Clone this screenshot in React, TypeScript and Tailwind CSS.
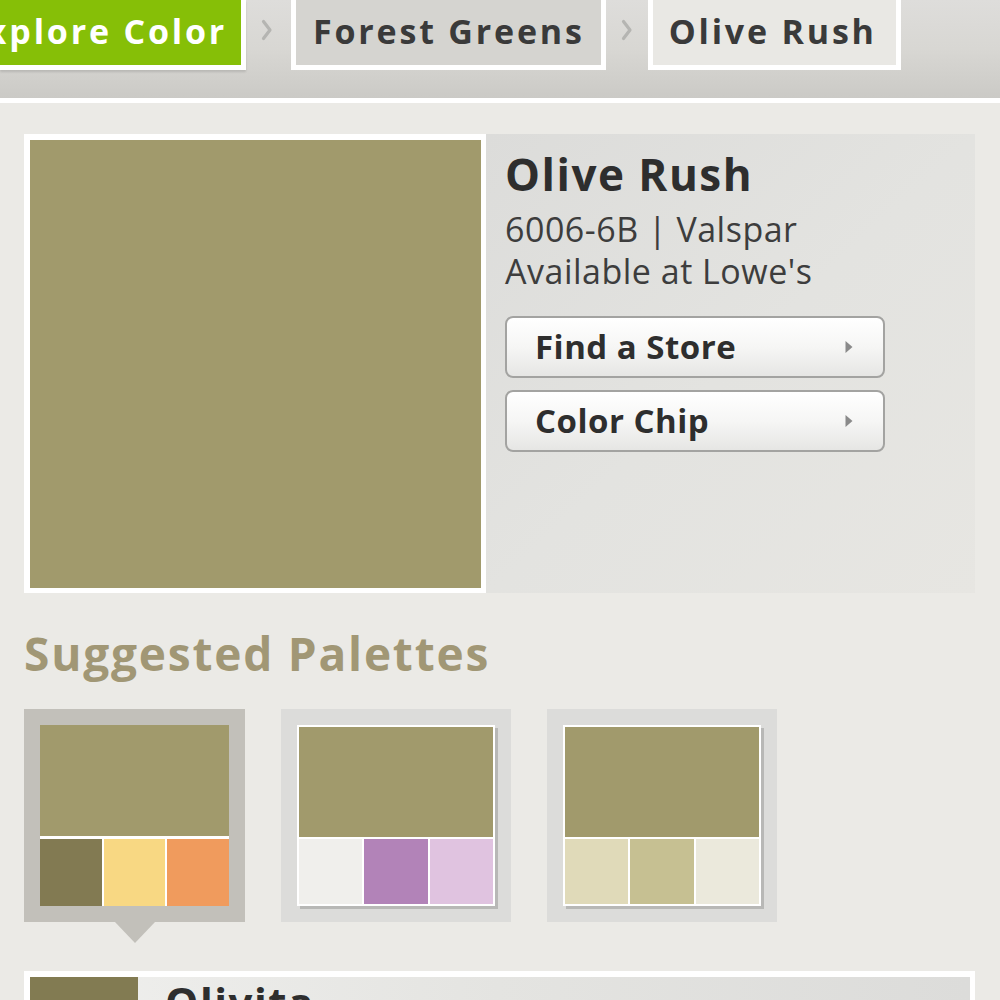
import React from "react";

const font = { fontFamily: '"Open Sans", "Liberation Sans", sans-serif' };

function Chevron({ ml, mr }: { ml: string; mr: string }) {
  return (
    <div className={`h-[70px] flex items-center pb-[10px] ${ml} ${mr}`}>
      <svg width="12" height="22" viewBox="0 0 12 22">
        <path d="M2.5 2.5 L9 11 L2.5 19.5" fill="none" stroke="#b5b5b2" strokeWidth="3.2" strokeLinecap="round" strokeLinejoin="round" />
      </svg>
    </div>
  );
}

function Tri() {
  return (
    <svg width="10" height="16" viewBox="0 0 10 16">
      <path d="M1.5 2 L8.5 8 L1.5 14 Z" fill="#8a8a8a" />
    </svg>
  );
}

function Palette({ selected, colors }: { selected?: boolean; colors: string[] }) {
  return (
    <div className="relative">
      <div className={`${selected ? "bg-[#c2c0ba] w-[221px]" : "bg-[#dcdcda] w-[230px]"} h-[213px] p-[16px]`}>
        {selected ? (
          <div className="flex flex-col h-full bg-white">
            <div className="h-[111px] bg-[#a19a6c]" />
            <div className="flex gap-[2px] mt-[3px] flex-1">
              {colors.map((c, i) => (
                <div key={i} className="flex-1" style={{ background: c }} />
              ))}
            </div>
          </div>
        ) : (
          <div className="flex flex-col h-full bg-white p-[2px] shadow-[3px_3px_0_#b8b8b6]">
            <div className="h-[110px] bg-[#a19a6c]" />
            <div className="flex gap-[2px] mt-[2px] flex-1">
              {colors.map((c, i) => (
                <div key={i} className="flex-1" style={{ background: c }} />
              ))}
            </div>
          </div>
        )}
      </div>
      {selected && (
        <div className="absolute left-[91px] top-[213px] w-0 h-0 border-l-[20px] border-r-[20px] border-t-[21px] border-l-transparent border-r-transparent border-t-[#c2c0ba]" />
      )}
    </div>
  );
}

export default function App() {
  return (
    <div className="w-[1000px] h-[1000px] overflow-hidden bg-[#ebeae6]" style={font}>
      {/* header */}
      <div className="h-[103px] bg-gradient-to-b from-[#dedddb] via-[#d8d7d3] to-[#cbcac6] border-b-[5px] border-white flex items-start">
        <div className="h-[70px] w-[246px] shrink-0 bg-[#86bf07] border-r-[5px] border-b-[5px] border-white flex items-center justify-end pr-[14px] pb-[2px] shadow-[0_2px_2px_rgba(0,0,0,0.12)]">
          <span className="text-white font-bold text-[34px] tracking-[2.8px] whitespace-nowrap">Explore Color</span>
        </div>
        <Chevron ml="ml-[15px]" mr="mr-[18px]" />
        <div className="h-[70px] bg-[#d5d4d0] border-[5px] border-t-0 border-white flex items-center pl-[17px] pr-[16px] pb-[3px]">
          <span className="text-[#3a3a3a] font-bold text-[34px] tracking-[2.8px] whitespace-nowrap">Forest Greens</span>
        </div>
        <Chevron ml="ml-[15px]" mr="mr-[15px]" />
        <div className="h-[70px] bg-[#e9e8e4] border-[5px] border-t-0 border-white flex items-center pl-[16px] pr-[19px] pb-[3px]">
          <span className="text-[#3a3a3a] font-bold text-[34px] tracking-[2.8px] whitespace-nowrap">Olive Rush</span>
        </div>
      </div>

      {/* main */}
      <div className="pl-[24px] pr-[25px] pt-[31px]">
        <div className="flex h-[459px]">
          <div className="w-[462px] h-full bg-white p-[6px] pb-[5px] pr-[5px]">
            <div className="w-full h-full bg-[#a19a6c]" />
          </div>
          <div className="flex-1 bg-gradient-to-br from-[#dcdcda] via-[#e3e3e0] to-[#e7e6e2] pl-[19px] pt-[12px]">
            <div className="text-[#2e2e2e] font-bold text-[44px] leading-[56px] tracking-[1.5px]">Olive Rush</div>
            <div className="text-[#3d3d3d] text-[34px] leading-[42px] tracking-[0.5px] mt-[6px]">6006-6B | Valspar</div>
            <div className="text-[#3d3d3d] text-[34px] leading-[42px] tracking-[0.5px]">Available at Lowe's</div>
            <div className="mt-[24px] flex flex-col gap-[12px] w-[380px]">
              {["Find a Store", "Color Chip"].map((t) => (
                <div
                  key={t}
                  className="h-[62px] rounded-[8px] border-2 border-[#a3a3a1] bg-gradient-to-b from-white via-[#f6f6f5] to-[#e6e6e4] flex items-center justify-between pl-[28px] pr-[29px]"
                >
                  <span className="text-[#2e2e2e] font-bold text-[33px] tracking-[0.5px]">{t}</span>
                  <Tri />
                </div>
              ))}
            </div>
          </div>
        </div>

        <div className="mt-[32px] text-[#a19775] font-bold text-[46px] leading-[56px] tracking-[1.8px]">Suggested Palettes</div>

        <div className="mt-[28px] flex gap-[36px]">
          <Palette selected colors={["#827a52", "#f8d883", "#f09b5d"]} />
          <Palette colors={["#f0efec", "#b283b8", "#e0c3e0"]} />
          <Palette colors={["#e0dab9", "#c6c092", "#ebe9dc"]} />
        </div>

        <div className="mt-[49px] bg-white pt-[6px] pl-[6px] pr-[5px] h-[60px]">
          <div className="flex h-full bg-gradient-to-r from-[#f0f0ee] via-[#e4e4e1] to-[#dcdcda]">
            <div className="w-[108px] h-full bg-[#827b52]" />
            <div className="pl-[27px] text-[#2e2e2e] font-bold text-[42px] leading-[50px] tracking-[1.5px]">Olivita</div>
          </div>
        </div>
      </div>
    </div>
  );
}
